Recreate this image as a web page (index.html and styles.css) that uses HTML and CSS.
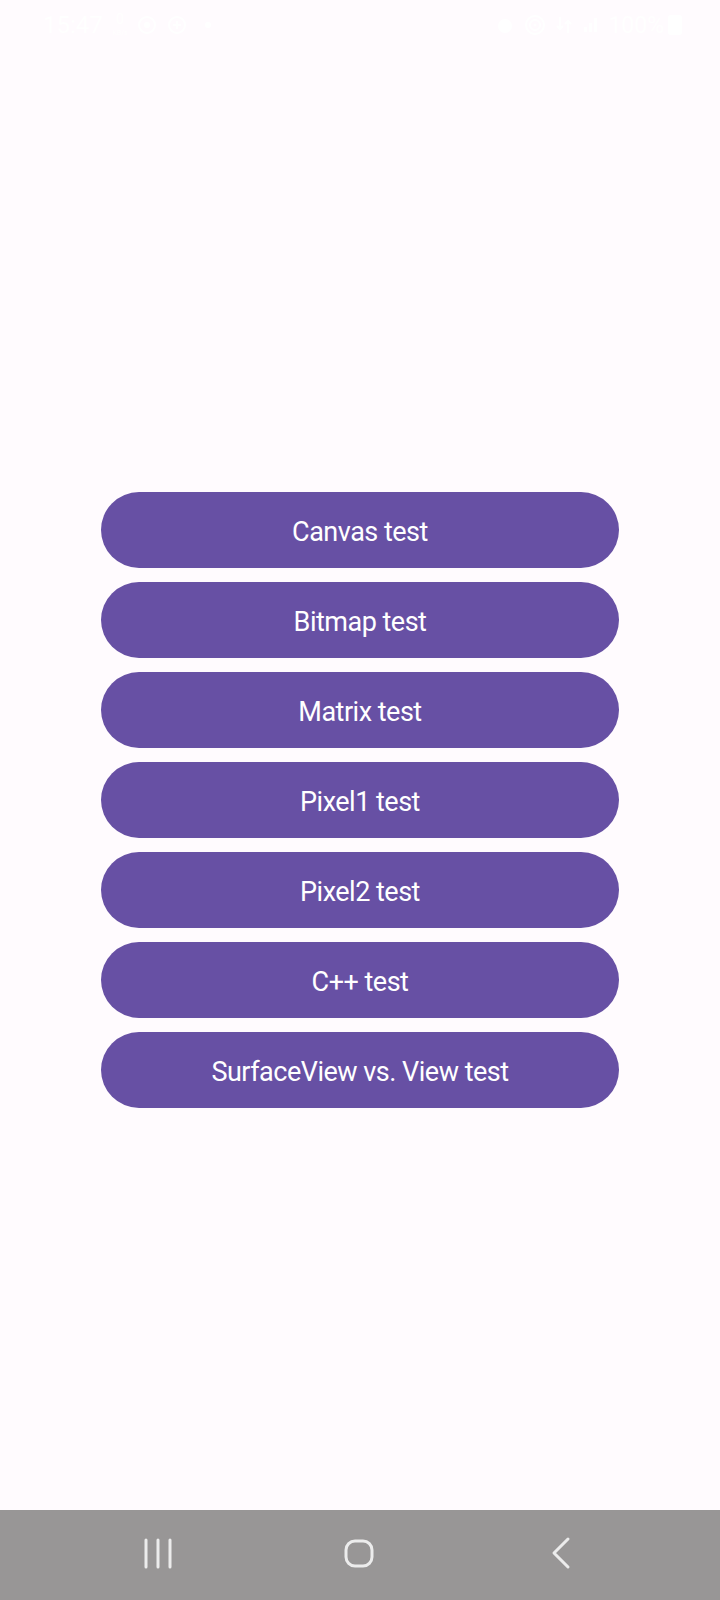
FILE: index.html
```html
<!DOCTYPE html>
<html lang="en">
<head>
<meta charset="utf-8">
<title>Tests</title>
<link rel="stylesheet" href="styles.css">
</head>
<body>
<div class="screen">
  <header class="status">
    <div class="status-left">
      <span class="time">15:47</span>
      <svg class="si" width="14" height="26" viewBox="0 0 14 26"><text x="7" y="12" class="si-t" text-anchor="middle">0</text><text x="7" y="23" class="si-s" text-anchor="middle">KB/s</text></svg>
      <svg class="si" width="20" height="20" viewBox="0 0 20 20"><circle cx="10" cy="10" r="8" fill="none" stroke="#fff" stroke-width="2"/><circle cx="10" cy="10" r="3" fill="#fff"/></svg>
      <svg class="si" width="20" height="20" viewBox="0 0 20 20"><circle cx="10" cy="10" r="8" fill="none" stroke="#fff" stroke-width="2"/><path d="M6 10h8M10 6v8" stroke="#fff" stroke-width="2"/></svg>
      <span class="dot"></span>
    </div>
    <div class="status-right">
      <svg class="si" width="18" height="18" viewBox="0 0 18 18"><circle cx="9" cy="10" r="7" fill="#fff"/></svg>
      <svg class="si" width="22" height="22" viewBox="0 0 22 22"><circle cx="11" cy="11" r="9" fill="none" stroke="#fff" stroke-width="2"/><circle cx="11" cy="11" r="5" fill="none" stroke="#fff" stroke-width="2"/><circle cx="11" cy="11" r="1.5" fill="#fff"/></svg>
      <svg class="si" width="16" height="20" viewBox="0 0 16 20"><path d="M4 2v12M1 11l3 3 3-3M12 18V6M9 9l3-3 3 3" fill="none" stroke="#fff" stroke-width="2"/></svg>
      <svg class="si" width="16" height="18" viewBox="0 0 16 18"><path d="M2 16h3v-5H2zM7 16h3V7H7zM12 16h3V2h-3z" fill="#fff"/></svg>
      <span class="batt-text">100%</span>
      <span class="batt"></span>
    </div>
  </header>

  <main class="main">
    <div class="buttons">
      <button class="btn">Canvas test</button>
      <button class="btn">Bitmap test</button>
      <button class="btn">Matrix test</button>
      <button class="btn">Pixel1 test</button>
      <button class="btn">Pixel2 test</button>
      <button class="btn">C++ test</button>
      <button class="btn">SurfaceView vs. View test</button>
    </div>
  </main>

  <nav class="navbar">
    <svg class="nav-icon nav-recents" width="30" height="32" viewBox="0 0 30 32"><path d="M3 3v27M15 3v27M27 3v27" stroke="#ececec" stroke-width="3" stroke-linecap="round"/></svg>
    <svg class="nav-icon nav-home" width="32" height="32" viewBox="0 0 32 32"><rect x="3" y="4" width="26" height="25" rx="9" fill="none" stroke="#ececec" stroke-width="3"/></svg>
    <svg class="nav-icon nav-back" width="22" height="34" viewBox="0 0 22 34"><path d="M18 3L4 17l14 14" fill="none" stroke="#ececec" stroke-width="3" stroke-linecap="round" stroke-linejoin="round"/></svg>
  </nav>
</div>
</body>
</html>
```

FILE: styles.css
```css
html, body {
  margin: 0;
  padding: 0;
  background: #fffbfe;
}

.screen {
  width: 720px;
  height: 1600px;
  display: flex;
  flex-direction: column;
  font-family: Roboto, "Noto Sans", sans-serif;
}

.status {
  height: 48px;
  flex: none;
  display: flex;
  justify-content: space-between;
  align-items: center;
  padding: 2px 38px 0 43px;
  box-sizing: border-box;
  color: #ffffff;
}

.status-left, .status-right {
  display: flex;
  align-items: center;
  gap: 10px;
}

.time {
  font-family: Roboto, sans-serif;
  font-size: 24px;
  color: #ffffff;
}

.si-t { font: 14px Roboto, sans-serif; fill: #fff; }
.si-s { font: 7px Roboto, sans-serif; fill: #fff; }

.dot {
  width: 6px;
  height: 6px;
  border-radius: 50%;
  background: #fff;
  margin-left: 8px;
}

.batt-text {
  font-family: Roboto, sans-serif;
  font-size: 23px;
  color: #fff;
  margin-right: -6px;
}

.batt {
  width: 14px;
  height: 20px;
  border-radius: 3px;
  background: #fff;
}

.main {
  flex: 1;
  display: flex;
  flex-direction: column;
  justify-content: center;
  padding-top: 42px;
}

.buttons {
  display: flex;
  flex-direction: column;
  gap: 14px;
  padding: 0 101px;
}

.btn {
  height: 76px;
  border: none;
  border-radius: 38px;
  background: #6750a4;
  color: #ffffff;
  font-family: Roboto, "Noto Sans", sans-serif;
  font-size: 27px;
  letter-spacing: -0.5px;
  padding: 3px 0 0;
  margin: 0;
  cursor: pointer;
}

.navbar {
  height: 90px;
  flex: none;
  background: #989696;
  display: flex;
  align-items: center;
  padding: 0 0 4px 143px;
  box-sizing: border-box;
}

.nav-recents { margin-right: 170px; }
.nav-back { margin-left: 175px; }
```
